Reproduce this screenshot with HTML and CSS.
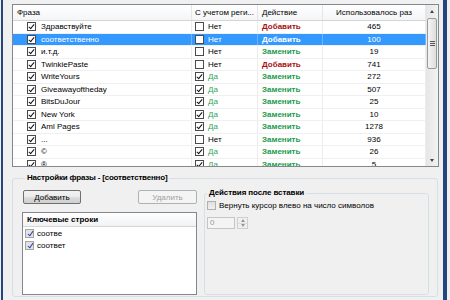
FILE: index.html
```html
<!DOCTYPE html>
<html lang="ru">
<head>
    <meta charset="UTF-8">
    <title>Фразы</title>
    <link rel="stylesheet" href="styles.css">
</head>
<body>
<div class="window">
    <div class="frame">
        <!-- список фраз -->
        <div class="grid-box">
            <div class="grid">
                <div class="grid-head">
                    <div class="cell c1">Фраза</div>
                    <div class="cell c2">С учетом реги...</div>
                    <div class="cell c3">Действие</div>
                    <div class="cell c4">Использовалось раз</div>
                </div>
                <div class="row">
                    <div class="cell c1"><span class="cb on"></span>Здравствуйте</div>
                    <div class="cell c2"><span class="cb"></span>Нет</div>
                    <div class="cell c3 add">Добавить</div>
                    <div class="cell c4">465</div>
                </div>
                <div class="row sel">
                    <div class="cell c1"><span class="cb on"></span>соответственно</div>
                    <div class="cell c2"><span class="cb"></span>Нет</div>
                    <div class="cell c3 add">Добавить</div>
                    <div class="cell c4">100</div>
                </div>
                <div class="row">
                    <div class="cell c1"><span class="cb on"></span>и.т.д.</div>
                    <div class="cell c2"><span class="cb"></span>Нет</div>
                    <div class="cell c3 repl">Заменить</div>
                    <div class="cell c4">19</div>
                </div>
                <div class="row">
                    <div class="cell c1"><span class="cb on"></span>TwinkiePaste</div>
                    <div class="cell c2"><span class="cb"></span>Нет</div>
                    <div class="cell c3 add">Добавить</div>
                    <div class="cell c4">741</div>
                </div>
                <div class="row">
                    <div class="cell c1"><span class="cb on"></span>WriteYours</div>
                    <div class="cell c2 yes"><span class="cb on"></span>Да</div>
                    <div class="cell c3 repl">Заменить</div>
                    <div class="cell c4">272</div>
                </div>
                <div class="row">
                    <div class="cell c1"><span class="cb on"></span>Giveawayoftheday</div>
                    <div class="cell c2 yes"><span class="cb on"></span>Да</div>
                    <div class="cell c3 repl">Заменить</div>
                    <div class="cell c4">507</div>
                </div>
                <div class="row">
                    <div class="cell c1"><span class="cb on"></span>BitsDuJour</div>
                    <div class="cell c2 yes"><span class="cb on"></span>Да</div>
                    <div class="cell c3 repl">Заменить</div>
                    <div class="cell c4">25</div>
                </div>
                <div class="row">
                    <div class="cell c1"><span class="cb on"></span>New York</div>
                    <div class="cell c2 yes"><span class="cb on"></span>Да</div>
                    <div class="cell c3 repl">Заменить</div>
                    <div class="cell c4">10</div>
                </div>
                <div class="row">
                    <div class="cell c1"><span class="cb on"></span>Aml Pages</div>
                    <div class="cell c2 yes"><span class="cb on"></span>Да</div>
                    <div class="cell c3 repl">Заменить</div>
                    <div class="cell c4">1278</div>
                </div>
                <div class="row">
                    <div class="cell c1"><span class="cb on"></span>...</div>
                    <div class="cell c2"><span class="cb"></span>Нет</div>
                    <div class="cell c3 repl">Заменить</div>
                    <div class="cell c4">936</div>
                </div>
                <div class="row">
                    <div class="cell c1"><span class="cb on"></span>©</div>
                    <div class="cell c2 yes"><span class="cb on"></span>Да</div>
                    <div class="cell c3 repl">Заменить</div>
                    <div class="cell c4">26</div>
                </div>
                <div class="row">
                    <div class="cell c1"><span class="cb on"></span>®</div>
                    <div class="cell c2 yes"><span class="cb on"></span>Да</div>
                    <div class="cell c3 repl">Заменить</div>
                    <div class="cell c4">5</div>
                </div>
            </div>
            <div class="vscroll">
                <div class="sb-btn"><span class="arr-up"></span></div>
                <div class="sb-thumb"><span class="grip"></span></div>
                <div class="sb-track"></div>
                <div class="sb-btn"><span class="arr-down"></span></div>
            </div>
        </div>

        <!-- настройки выбранной фразы -->
        <fieldset class="settings">
            <legend>Настройки фразы - [соответственно]</legend>
            <div class="settings-body">
                <div class="left-col">
                    <div class="btn-row">
                        <button class="btn btn-add">Добавить</button>
                        <button class="btn btn-del" disabled>Удалить</button>
                    </div>
                    <div class="keys">
                        <div class="keys-head">Ключевые строки</div>
                        <div class="key-item"><span class="cb2"></span>соотве</div>
                        <div class="key-item"><span class="cb2"></span>соответ</div>
                    </div>
                </div>
                <fieldset class="after">
                    <legend>Действия после вставки</legend>
                    <div class="opt-row"><span class="cb3"></span>Вернуть курсор влево на число символов</div>
                    <div class="spin">
                        <div class="spin-input">0</div>
                        <div class="spin-btns">
                            <div class="spin-btn"><span class="arr-up small"></span></div>
                            <div class="spin-btn"><span class="arr-down small"></span></div>
                        </div>
                    </div>
                </fieldset>
            </div>
        </fieldset>
    </div>
</div>
</body>
</html>
```

FILE: styles.css
```css
* {
    box-sizing: border-box;
}
body {
    margin: 0;
    width: 450px;
    height: 300px;
    overflow: hidden;
    background-color: #f0f0f0;
    font-family: "Liberation Sans", Arial, sans-serif;
    font-size: 8px;
    color: #000;
}
.window {
    display: flex;
    height: 300px;
    margin: 0 3px 0 1px;
    border-left: 2px solid #24467e;
    border-right: 4px solid #24467e;
}
.frame {
    flex: 1;
    padding: 4px 6px 0 9px;
    display: flex;
    flex-direction: column;
}
.grid-box {
    display: flex;
    height: 163px;
    border: 1px solid #828790;
    background-color: #fff;
}
.grid {
    flex: 1;
    overflow: hidden;
}
.grid-head {
    display: flex;
    height: 16px;
    border-bottom: 1px solid #d5d5d5;
    background: linear-gradient(#ffffff, #f4f5f7);
}
.grid-head .cell {
    border-right: 1px solid #e3e6ea;
    padding-left: 4px;
    line-height: 15px;
    white-space: nowrap;
    overflow: hidden;
}
.grid-head .c2 {
    padding-left: 3px;
}
.grid-head .c4 {
    padding-left: 0;
    text-align: center;
}
.c1 { width: 179px; }
.c2 { width: 66px; }
.c3 { width: 65px; }
.c4 { flex: 1; }
.row {
    display: flex;
    height: 12.5px;
    border-bottom: 1px solid #f0f0f0;
}
.row .cell {
    display: flex;
    align-items: center;
    border-right: 1px solid #ededed;
    white-space: nowrap;
}
.row .c1 {
    padding-left: 14px;
    gap: 5px;
}
.row .c2 {
    padding-left: 3px;
    gap: 4px;
}
.row .c3 {
    padding-left: 4px;
}
.row .c4 {
    justify-content: center;
}
.add {
    color: #a81010;
    font-weight: bold;
}
.repl {
    color: #1c9a4c;
    font-weight: bold;
}
.yes {
    color: #34a35c;
}
.row.sel {
    background-color: #3399ff;
    color: #fff;
}
.row.sel .cell {
    color: #fff;
    border-right-color: #6db3ff;
}
.cb {
    position: relative;
    flex: none;
    width: 9px;
    height: 9px;
    border: 1px solid #4a4a4a;
    background-color: #fff;
}
.cb.on::after {
    content: "";
    position: absolute;
    left: 2px;
    top: 0;
    width: 2px;
    height: 5px;
    border: solid #111;
    border-width: 0 1.5px 1.5px 0;
    transform: rotate(40deg);
}
/* полоса прокрутки */
.vscroll {
    width: 12px;
    display: flex;
    flex-direction: column;
    background: linear-gradient(90deg, #e6e6e6, #f2f2f2);
}
.sb-btn {
    height: 12px;
    display: flex;
    align-items: center;
    justify-content: center;
}
.arr-up {
    width: 0;
    height: 0;
    border-left: 2.5px solid transparent;
    border-right: 2.5px solid transparent;
    border-bottom: 3px solid #444;
}
.arr-down {
    width: 0;
    height: 0;
    border-left: 2.5px solid transparent;
    border-right: 2.5px solid transparent;
    border-top: 3px solid #444;
}
.arr-up.small {
    border-bottom-color: #999;
}
.arr-down.small {
    border-top-color: #999;
}
.sb-thumb {
    height: 51px;
    margin: 1px 1px 0 1px;
    border: 1px solid #9a9a9a;
    border-radius: 2px;
    background: linear-gradient(90deg, #f4f4f4, #dedede);
    display: flex;
    align-items: center;
    justify-content: center;
}
.grip {
    width: 5px;
    height: 5px;
    background: repeating-linear-gradient(#555 0 1px, transparent 1px 2px);
}
.sb-track {
    flex: 1;
}
/* блок настроек */
.settings {
    margin: 6px 1px 0 0;
    height: 124px;
    min-width: 0;
    border: 1px solid #d5dfe5;
    border-radius: 3px;
    padding: 5px 8px 1px 9px;
}
.settings > legend {
    font-weight: bold;
    padding: 0 2px;
    margin-left: 3px;
    line-height: 10px;
    letter-spacing: -0.2px;
}
.settings-body {
    display: flex;
    gap: 7px;
}
.left-col {
    width: 175px;
    padding-top: 2px;
}
.btn-row {
    display: flex;
    justify-content: space-between;
}
.btn {
    height: 14px;
    padding: 0;
    font-family: inherit;
    font-size: 8px;
    border-radius: 2px;
}
.btn-add {
    width: 58px;
    margin-left: 1px;
    border: 1px solid #707070;
    background: linear-gradient(#f2f2f2 0%, #ebebeb 50%, #dddddd 51%, #cfcfcf 100%);
    color: #000;
}
.btn-del {
    width: 59px;
    border: 1px solid #adb2b5;
    background-color: #f4f4f4;
    color: #a0a0a0;
}
.keys {
    margin-top: 8px;
    height: 83px;
    border: 1px solid #828790;
    background-color: #fff;
}
.keys-head {
    height: 14px;
    line-height: 13px;
    padding-left: 4px;
    font-weight: bold;
    border-bottom: 1px solid #d5d5d5;
    background: linear-gradient(#ffffff, #f1f2f4);
}
.key-item {
    display: flex;
    align-items: center;
    gap: 3px;
    height: 11px;
    padding-left: 2px;
    margin-top: 1px;
}
.cb2 {
    position: relative;
    width: 9px;
    height: 9px;
    border: 1px solid #a5a5a5;
    background-color: #e2e2e2;
}
.cb2::after {
    content: "";
    position: absolute;
    left: 2.5px;
    top: 0;
    width: 2px;
    height: 5px;
    border: solid #2a48b0;
    border-width: 0 1.5px 1.5px 0;
    transform: rotate(35deg);
}
.after {
    width: 225px;
    height: 107px;
    margin: 0;
    min-width: 0;
    border: 1px solid #d5dfe5;
    border-radius: 3px;
    padding: 2px 2px;
}
.after > legend {
    font-weight: bold;
    padding: 0 2px;
    margin-left: 0;
    line-height: 10px;
    letter-spacing: -0.1px;
}
.opt-row {
    display: flex;
    align-items: center;
    gap: 3px;
    height: 10px;
}
.cb3 {
    width: 9px;
    height: 9px;
    border: 1px solid #b0b0b0;
    background: linear-gradient(#e0e0e0, #f0f0f0);
}
.spin {
    display: flex;
    gap: 2px;
    margin-top: 7px;
}
.spin-input {
    width: 28px;
    height: 12px;
    border: 1px solid #c5c5c5;
    background-color: #f4f4f4;
    color: #9a9a9a;
    padding-left: 2px;
    line-height: 10px;
}
.spin-btns {
    width: 11px;
    height: 12px;
    display: flex;
    flex-direction: column;
    border: 1px solid #cfcfcf;
}
.spin-btn {
    flex: 1;
    display: flex;
    align-items: center;
    justify-content: center;
}
.spin-btn + .spin-btn {
    border-top: 1px solid #dcdcdc;
}
```
